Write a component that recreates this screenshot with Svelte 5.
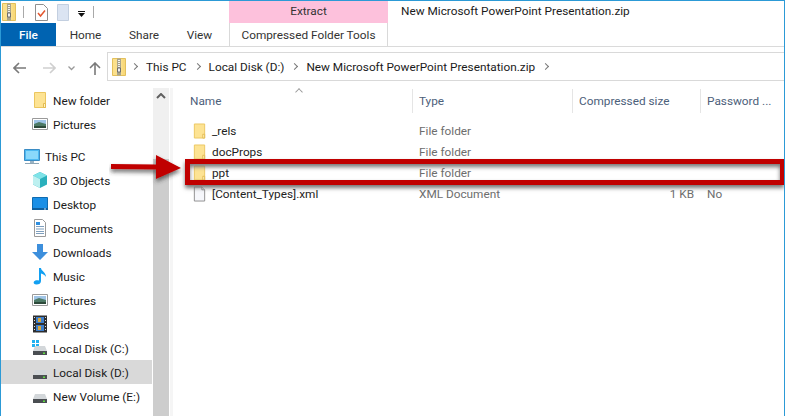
<script>
  const nav = [
    { label: "New folder", icon: "folder" },
    { label: "Pictures", icon: "pictures", gapAfter: true },
    { label: "This PC", icon: "pc", top: true },
    { label: "3D Objects", icon: "cube" },
    { label: "Desktop", icon: "desktop" },
    { label: "Documents", icon: "documents" },
    { label: "Downloads", icon: "downloads" },
    { label: "Music", icon: "music" },
    { label: "Pictures", icon: "pictures" },
    { label: "Videos", icon: "videos" },
    { label: "Local Disk (C:)", icon: "diskc" },
    { label: "Local Disk (D:)", icon: "disk", active: true },
    { label: "New Volume (E:)", icon: "disk" }
  ];

  const files = [
    { name: "_rels", type: "File folder", size: "", pw: "", icon: "folder" },
    { name: "docProps", type: "File folder", size: "", pw: "", icon: "folder" },
    { name: "ppt", type: "File folder", size: "", pw: "", icon: "folder" },
    { name: "[Content_Types].xml", type: "XML Document", size: "1 KB", pw: "No", icon: "file" }
  ];
</script>

{#snippet zip()}
  <svg width="14" height="18" viewBox="0 0 14 18">
    <path d="M.5 .5h13v17H.500z" fill="#fbe08c" stroke="#e3c05c" />
    <path d="M5 .5h4v17H5z" fill="#a9a48c" />
    <path d="M6 2h2v1H6zM6 4h2v1H6zM6 6h2v1H6zM6 8h2v1H6z" fill="#f2f2f2" />
    <path d="M5.500 10h3v4h-3z" fill="#efefef" stroke="#6e6e6e" />
    <path d="M10.500 1h2.500v16h-2.500z" fill="#f7d36f" opacity=".6" />
  </svg>
{/snippet}

{#snippet icon(name)}
  <svg class="ico" width="16" height="20" viewBox="0 0 16 20">
    {#if name === "folder"}
      <path d="M2.500 2.500h11v15h-11z" fill="#fde393" stroke="#ebc65f" />
      <path d="M11.500 17.500v-4h2v4z" fill="#fff3c4" stroke="#e3bb50" />
    {:else if name === "file"}
      <path d="M2.500 2.500h8l3 3v12h-11z" fill="#f6f7fb" stroke="#8d8d8d" />
      <path d="M10.500 2.500v3h3" fill="#fff" stroke="#8d8d8d" />
    {:else if name === "pictures"}
      <path d="M.5 4.500h15v11H.500z" fill="#fff" stroke="#9a9a9a" />
      <path d="M2 6h12v4H2z" fill="#9fc4e6" />
      <path d="M2 10l5-2 7 2v4H2z" fill="#4d7a66" />
      <path d="M2 12h12v2H2z" fill="#2d4a3a" />
    {:else if name === "pc"}
      <path d="M.5 3.500h15v11H.500z" fill="#4db9f2" stroke="#3b8cc4" />
      <path d="M2 5h12v8H2z" fill="#8ad8fb" />
      <path d="M6 15h4v2H6z" fill="#9ab3c4" />
      <path d="M1 17h14v1H1z" fill="#8ea6b6" />
    {:else if name === "cube"}
      <path d="M8 2l7 3.500v9L8 18l-7-3.500v-9z" fill="#2ab0bc" />
      <path d="M8 2l7 3.500L8 9 1 5.500z" fill="#7fe3e8" />
      <path d="M1 5.500L8 9v9l-7-3.500z" fill="#bdf0f0" />
    {:else if name === "desktop"}
      <path d="M.5 3.500h15v12H.500z" fill="#1a8fe6" stroke="#0f6bb0" />
      <path d="M0 14h16v2H0z" fill="#0f5f9e" />
      <path d="M12 14.500h2v1h-2z" fill="#cde8fb" />
    {:else if name === "documents"}
      <path d="M2.500 1.500h8l3 3v14h-11z" fill="#fff" stroke="#9a9a9a" />
      <path d="M4 8h8v1H4zM4 10.500h8v1H4zM4 13h8v1H4zM4 15h8v1H4z" fill="#7f9fbe" />
      <path d="M4 4h4v3H4z" fill="#2e8fe0" />
    {:else if name === "downloads"}
      <path d="M5 2h6v8h5l-8 8-8-8h5z" fill="#3d8fdc" />
    {:else if name === "music"}
      <path d="M7 2h2c0 3 5 4 5 9-1-2-3-3-5-3.500V15c0 2.500-2 3.500-4.500 3.500C2 18.500 1 17 2 15.500s3.500-1.500 5-1z" fill="#12a0f2" />
    {:else if name === "videos"}
      <path d="M1 1.500h14v17H1z" fill="#2e2e2e" />
      <path d="M4 3h8v6H4z" fill="#3d7ecb" />
      <path d="M4 11h8v6H4z" fill="#3d7ecb" />
      <path d="M6 4h3v4H6z" fill="#d8a63a" />
      <path d="M6 12h3v4H6z" fill="#d8a63a" />
      <path d="M2 3h1v1H2zM2 6h1v1H2zM2 9h1v1H2zM2 12h1v1H2zM2 15h1v1H2zM13 3h1v1h-1zM13 6h1v1h-1zM13 9h1v1h-1zM13 12h1v1h-1zM13 15h1v1h-1z" fill="#ddd" />
    {:else}
      {#if name === "diskc"}
        <path d="M0 2h3v3H0zM4 2h3v3H4zM0 6h3v3H0zM4 6h3v3H4z" fill="#20b0f0" />
      {/if}
      <path d="M3 8h10l2 5H1z" fill="#d3d7da" />
      <path d="M1 13h14v4H1z" fill="#4a4e52" />
      <path d="M11 14.500h2v1.500h-2z" fill="#5fe040" />
    {/if}
  </svg>
{/snippet}

<div class="window">
  <div class="qat">
    <span class="z">{@render zip()}</span>
    <span class="bar"></span>
    <svg class="doc" width="13" height="17" viewBox="0 0 13 17">
      <path d="M.5 .5h8l4 4v12H.500z" fill="#fff" stroke="#8f8f8f" />
      <path d="M3 9l2.500 3L10 6.500" fill="none" stroke="#e4572e" stroke-width="1.500" />
    </svg>
    <svg class="blank" width="13" height="17" viewBox="0 0 13 17">
      <path d="M.5 .5h11v16H.500z" fill="#dbe4f2" stroke="#c3cfe0" />
    </svg>
    <svg class="drop" width="8" height="6" viewBox="0 0 8 6">
      <path d="M0 0h7v1H0z" fill="#111" /><path d="M0 2h7L3.500 6z" fill="#111" />
    </svg>
    <span class="bar b2"></span>
    <div class="extract">Extract</div>
    <div class="title">New Microsoft PowerPoint Presentation.zip</div>
  </div>

  <div class="tabs">
    <div class="file-tab">File</div>
    <span class="tab home">Home</span>
    <span class="tab share">Share</span>
    <span class="tab view">View</span>
    <div class="ctx">Compressed Folder Tools</div>
  </div>

  <div class="navrow">
    <svg class="nb back" width="13" height="12" viewBox="0 0 13 12"><path d="M6 1L1 6l5 5M1 6h12" fill="none" stroke="#7a7a7a" stroke-width="1.600" /></svg>
    <svg class="nb fwd" width="13" height="12" viewBox="0 0 13 12"><path d="M7 1l5 5-5 5M12 6H0" fill="none" stroke="#cfcfcf" stroke-width="1.600" /></svg>
    <svg class="nb chev" width="7" height="5" viewBox="0 0 7 5"><path d="M.5 .5l3 3 3-3" fill="none" stroke="#9a9a9a" stroke-width="1.300" /></svg>
    <svg class="nb up" width="12" height="13" viewBox="0 0 12 13"><path d="M1 6l5-5 5 5M6 1v12" fill="none" stroke="#7a7a7a" stroke-width="1.600" /></svg>
    <div class="address">
      <span class="z2">{@render zip()}</span>
      <span class="sep s1"></span>
      <span class="crumb">This PC</span>
      <span class="sep"></span>
      <span class="crumb">Local Disk (D:)</span>
      <span class="sep"></span>
      <span class="crumb">New Microsoft PowerPoint Presentation.zip</span>
      <span class="sep"></span>
    </div>
  </div>

  <div class="body">
    <aside class="sidebar">
      {#each nav as item}
        <div class="item" class:active={item.active} class:top={item.top} class:gap={item.gapAfter}>
          {@render icon(item.icon)}
          <span>{item.label}</span>
        </div>
      {/each}
    </aside>
    <div class="scroll">
      <svg width="10" height="6" viewBox="0 0 10 6"><path d="M1 5l4-4 4 4" fill="none" stroke="#606060" stroke-width="2" /></svg>
      <div class="thumb"></div>
    </div>
    <div class="split"></div>

    <main class="list">
      <div class="caret"></div>
      <div class="head">
        <div class="c name">Name</div>
        <div class="c type">Type</div>
        <div class="c size">Compressed size</div>
        <div class="c pw">Password ...</div>
      </div>
      {#each files as f}
        <div class="row">
          <div class="fname">{@render icon(f.icon)}<span>{f.name}</span></div>
          <div class="ftype">{f.type}</div>
          <div class="fsize">{f.size}</div>
          <div class="fpw">{f.pw}</div>
        </div>
      {/each}
    </main>
  </div>

  <div class="mark"></div>
  <svg class="arrow" width="84" height="36" viewBox="0 0 84 36">
    <defs>
      <filter id="sh" x="-10%" y="-20%" width="120%" height="160%">
        <feDropShadow dx="0" dy="3" stdDeviation="2" flood-color="#333" flood-opacity=".7" />
      </filter>
    </defs>
    <path d="M2 10l45 .5V1l25 13-25 11v-9.500L2 15z" fill="#c00000" filter="url(#sh)" />
  </svg>
</div>

<style>
  :global(body) {
    margin: 0;
    background: #fff;
  }

  .window {
    position: relative;
    width: 785px;
    height: 416px;
    box-sizing: border-box;
    border: 1px solid #2c9ad6;
    border-bottom: 0;
    overflow: hidden;
    background: #fff;
    font-family: Roboto, "Open Sans", sans-serif;
    font-size: 11.8px;
    color: #1b1b1b;
  }

  .qat {
    display: flex;
    align-items: center;
    height: 22px;
  }
  .z {
    display: flex;
    margin-left: 1px;
  }
  .bar {
    width: 1px;
    height: 12px;
    margin-left: 7px;
    background: #a9a9a9;
  }
  .doc {
    margin-left: 11px;
  }
  .blank {
    margin-left: 9px;
  }
  .drop {
    margin-left: 8px;
    margin-top: 4px;
  }
  .b2 {
    margin-left: 7px;
  }
  .extract {
    height: 22px;
    width: 159px;
    margin-left: 135px;
    background: #fdc1dc;
    text-align: center;
    line-height: 20px;
    color: #333;
  }
  .title {
    margin-left: 13px;
    margin-top: -3px;
  }

  .tabs {
    display: flex;
    height: 23px;
    border-bottom: 1px solid #dadada;
  }
  .file-tab {
    width: 55px;
    background: #0063b1;
    color: #fff;
    text-align: center;
    line-height: 25px;
    font-weight: 500;
  }
  .tab {
    line-height: 25px;
    text-align: center;
    color: #333;
  }
  .home {
    width: 59px;
  }
  .share {
    width: 58px;
  }
  .view {
    width: 53px;
  }
  .ctx {
    margin-left: 3px;
    width: 157px;
    height: 23px;
    background: #fff;
    border-left: 1px solid #d9d9d9;
    border-right: 1px solid #d9d9d9;
    text-align: center;
    line-height: 25px;
    color: #333;
  }

  .navrow {
    display: flex;
    align-items: center;
    height: 41px;
    box-sizing: border-box;
    padding-bottom: 2px;
  }
  .nb {
    flex: none;
    margin-top: 3px;
  }
  .back {
    margin-left: 12px;
  }
  .fwd {
    margin-left: 17px;
  }
  .chev {
    margin-left: 12px;
  }
  .up {
    margin-left: 14px;
  }
  .address {
    display: flex;
    align-items: center;
    flex: 1;
    height: 29px;
    margin-left: 6px;
    box-sizing: border-box;
    border: 1px solid #d9d9d9;
    border-right: 0;
  }
  .z2 {
    display: flex;
    margin-left: 4px;
  }
  .sep {
    width: 4px;
    height: 4px;
    margin: 0 9px 0 8px;
    border-top: 1.500px solid #777;
    border-right: 1.500px solid #777;
    transform: rotate(45deg);
  }
  .s1 {
    margin-left: 6px;
  }

  .body {
    display: flex;
    height: 329px;
  }
  .sidebar {
    width: 151px;
    flex: none;
  }
  .item {
    display: flex;
    align-items: center;
    gap: 5px;
    height: 24px;
    padding-left: 31px;
  }
  .item span {
    padding-top: 2px;
  }
  .item .ico {
    flex: none;
    width: 16px;
  }
  .item.gap {
    margin-bottom: 8px;
  }
  .item.top {
    padding-left: 23px;
  }
  .item.active {
    background: #d9d9d9;
  }
  .scroll {
    position: relative;
    width: 16px;
    flex: none;
    margin-left: 1px;
    background: #f0f0f0;
    display: flex;
    flex-direction: column;
    align-items: center;
    padding-top: 5px;
    box-sizing: border-box;
  }
  .thumb {
    position: absolute;
    left: 0;
    right: 0;
    top: 71px;
    bottom: 0;
    background: #cdcdcd;
  }
  .split {
    width: 3px;
    margin-left: 1px;
    background: #f5f5f5;
    flex: none;
  }

  .list {
    position: relative;
    flex: 1;
    padding-left: 18px;
  }
  .caret {
    position: absolute;
    left: 123px;
    top: 1px;
    width: 5px;
    height: 5px;
    border-top: 1px solid #999;
    border-left: 1px solid #999;
    transform: rotate(45deg) scale(.9);
  }
  .head {
    display: flex;
    height: 24px;
    color: #4c607a;
    margin-left: -2px;
    margin-top: 1px;
    margin-bottom: 7px;
  }
  .c {
    box-sizing: border-box;
    line-height: 24px;
    border-right: 1px solid #e5e5e5;
    padding-left: 6px;
  }
  .name {
    width: 224px;
    padding-left: 1px;
  }
  .type {
    width: 160px;
  }
  .size {
    width: 128px;
  }
  .pw {
    width: 80px;
    border-right: 0;
  }
  .row {
    display: flex;
    height: 21px;
    align-items: center;
    margin-left: -2px;
    color: #222;
  }
  .fname {
    display: flex;
    align-items: center;
    gap: 5px;
    width: 224px;
    padding-left: 3px;
    box-sizing: border-box;
  }
  .fname .ico {
    width: 15px;
  }
  .ftype {
    width: 160px;
    padding-left: 6px;
    box-sizing: border-box;
    color: #6d6d6d;
  }
  .fsize {
    width: 128px;
    box-sizing: border-box;
    padding-right: 7px;
    text-align: right;
    color: #6d6d6d;
  }
  .fpw {
    padding-left: 6px;
    color: #6d6d6d;
  }

  /* annotation over the list */
  .mark {
    position: absolute;
    left: 184px;
    top: 158px;
    width: 599px;
    height: 26px;
    box-sizing: border-box;
    border: 5px solid #c00000;
    border-right-width: 4px;
    box-shadow: 0 3px 4px #777, inset 0 3px 4px #777;
  }
  .arrow {
    position: absolute;
    left: 108px;
    top: 153px;
  }
</style>
